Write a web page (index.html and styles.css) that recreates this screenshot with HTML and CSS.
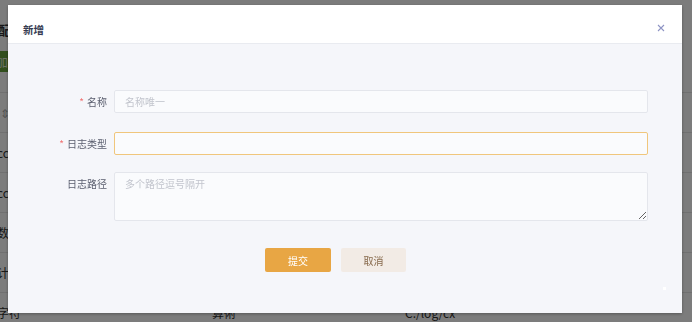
FILE: index.html
```html
<!DOCTYPE html>
<html lang="zh-CN">

<head>
    <meta charset="UTF-8">
    <meta name="viewport" content="width=device-width, initial-scale=1.0">
    <title>日志配置</title>
    <link rel="stylesheet" href="styles.css">
</head>

<body>
    <!-- page behind the dialog -->
    <div class="page">
        <h3 class="page-title">日志配置</h3>
        <div class="toolbar">
            <button class="btn-green">添加</button>
        </div>
        <table class="grid">
            <thead>
                <tr>
                    <th><span class="sort">&#8661;</span></th>
                    <th>日志类型</th>
                    <th>日志路径</th>
                </tr>
            </thead>
            <tbody>
                <tr><td>ccc</td><td>访问</td><td>C:/log/acc</td></tr>
                <tr><td>ccc</td><td>访问</td><td>C:/log/occ</td></tr>
                <tr><td>数据</td><td>数据</td><td>C:/log/data</td></tr>
                <tr><td>计算</td><td>统计</td><td>C:/log/stat</td></tr>
                <tr><td>字符</td><td>算術</td><td>C:/log/cx</td></tr>
            </tbody>
        </table>
    </div>

    <div class="mask">
        <div class="dialog">
            <div class="dialog-header">
                <span class="dialog-title">新增</span>
                <button class="dialog-close" aria-label="close">
                    <svg width="8" height="8" viewBox="0 0 8 8">
                        <path d="M1 1 L7 7 M7 1 L1 7" stroke="#8e94c4" stroke-width="1.1" fill="none" />
                    </svg>
                </button>
            </div>
            <div class="dialog-body">
                <form class="form">
                    <div class="form-item">
                        <label class="form-label"><span class="req">*</span>名称</label>
                        <input class="form-input" type="text" placeholder="名称唯一">
                    </div>
                    <div class="form-item item-gap-sm">
                        <label class="form-label"><span class="req">*</span>日志类型</label>
                        <input class="form-input is-focus" type="text">
                    </div>
                    <div class="form-item item-gap-lg">
                        <label class="form-label">日志路径</label>
                        <textarea class="form-textarea" placeholder="多个路径逗号隔开"></textarea>
                    </div>
                    <div class="form-actions">
                        <button type="button" class="btn btn-primary">提交</button>
                        <button type="button" class="btn btn-cancel">取消</button>
                    </div>
                </form>
            </div>
            <span class="corner-dot"></span>
        </div>
    </div>
</body>

</html>
```

FILE: styles.css
```css
* {
    margin: 0;
    padding: 0;
    box-sizing: border-box;
}

body {
    font-family: "Noto Sans CJK SC", "Noto Sans", sans-serif;
    background: #fff;
    width: 692px;
    height: 322px;
    overflow: hidden;
}

/* background page */
.page {
    margin-left: -40px;
    padding-top: 22px;
}

.page-title {
    font-size: 13px;
    color: #303133;
    line-height: 16px;
    padding-left: 12px;
}

.toolbar {
    margin-top: 10px;
    padding-left: 12px;
}

.btn-green {
    background: #67a33d;
    color: #dfe9d6;
    border: none;
    height: 21px;
    width: 48px;
    font-size: 12px;
    font-family: inherit;
}

.grid {
    margin-top: 20px;
    width: 732px;
    border-collapse: collapse;
    font-size: 12px;
    color: #333;
}

.grid th,
.grid td {
    height: 40px;
    border-top: 1px solid #e6e6e6;
    text-align: left;
    padding-left: 12px;
    font-weight: normal;
}

.grid th:first-child,
.grid td:first-child {
    width: 240px;
    padding-left: 37px;
}

.grid th:first-child {
    padding-left: 40px;
}

.grid th:nth-child(2),
.grid td:nth-child(2) {
    width: 193px;
}

.sort {
    color: #aaa;
}

/* dialog */
.mask {
    position: fixed;
    inset: 0;
    background: rgba(0, 0, 0, 0.515);
}

.dialog {
    position: absolute;
    left: 8px;
    top: 5px;
    width: 674px;
    height: 308px;
    background: #f5f6fa;
    box-shadow: 0 1px 3px rgba(0, 0, 0, 0.3);
    display: flex;
    flex-direction: column;
}

.dialog-header {
    height: 39px;
    background: #fff;
    border-bottom: 1px solid #e9ebf0;
    display: flex;
    justify-content: space-between;
    align-items: flex-start;
    padding: 19px 17px 0 15px;
}

.dialog-title {
    font-size: 10.5px;
    line-height: 12px;
    font-weight: bold;
    color: #363b52;
}

.dialog-close {
    border: none;
    background: none;
    margin-top: 0;
    display: flex;
}

.dialog-body {
    padding: 46px 34px 0 0;
}

.form-item {
    display: flex;
    align-items: flex-start;
}

.item-gap-sm {
    margin-top: 19px;
}

.item-gap-lg {
    margin-top: 17px;
}

.form-label {
    width: 106px;
    flex-shrink: 0;
    text-align: right;
    padding-right: 7px;
    font-size: 10px;
    line-height: 23px;
    color: #5c6070;
}

.req {
    color: #f07373;
    margin-right: 3px;
}

.form-input,
.form-textarea {
    flex: 1;
    height: 23px;
    background: #fafbfd;
    border: 1px solid #e4e6ec;
    border-radius: 2px;
    padding: 0 10px;
    font-size: 10px;
    font-family: inherit;
    color: #333;
    outline: none;
}

.form-input.is-focus {
    border-color: #f0c67c;
}

.form-textarea {
    height: 49px;
    padding-top: 3px;
    line-height: 15px;
    resize: vertical;
}

.form-input::placeholder,
.form-textarea::placeholder {
    color: #c2c5cd;
}

.form-actions {
    display: flex;
    gap: 10px;
    margin-top: 27px;
    padding-left: 257px;
}

.btn {
    height: 24px;
    border: none;
    border-radius: 2px;
    font-size: 10px;
    font-family: inherit;
}

.btn-primary {
    width: 66px;
    background: #e8a644;
    color: #fff;
}

.btn-cancel {
    width: 65px;
    background: #f2ebe5;
    color: #86684a;
}

.corner-dot {
    position: absolute;
    right: 16px;
    bottom: 23px;
    width: 3px;
    height: 3px;
    background: #fff;
}
```
